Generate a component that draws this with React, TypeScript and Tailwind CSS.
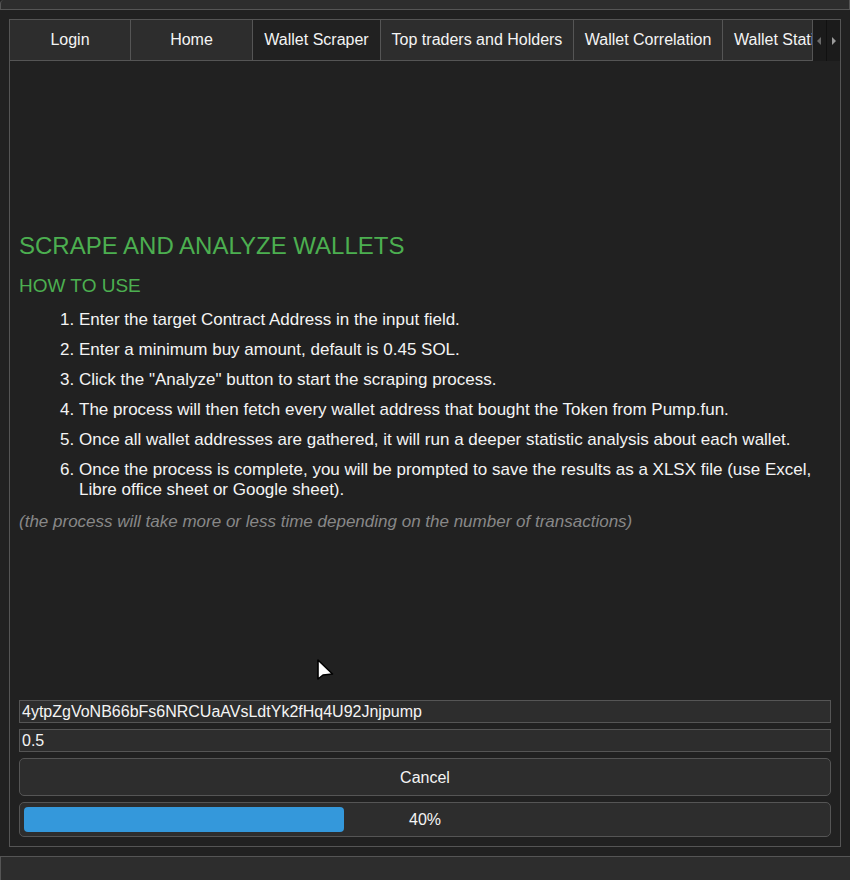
import React from "react";

const tabs = [
  { label: "Login", w: "w-[121px]" },
  { label: "Home", w: "w-[122px]" },
  { label: "Wallet Scraper", w: "w-[128px]", active: true },
  { label: "Top traders and Holders", w: "w-[193px]" },
  { label: "Wallet Correlation", w: "w-[149px]" },
  { label: "Wallet Statistics", w: "w-[90px]" },
];

const steps = [
  "Enter the target Contract Address in the input field.",
  "Enter a minimum buy amount, default is 0.45 SOL.",
  'Click the "Analyze" button to start the scraping process.',
  "The process will then fetch every wallet address that bought the Token from Pump.fun.",
  "Once all wallet addresses are gathered, it will run a deeper statistic analysis about each wallet.",
  "Once the process is complete, you will be prompted to save the results as a XLSX file (use Excel, Libre office sheet or Google sheet).",
];

const App = () => {
  const progress = 40;

  return (
    <div className="relative w-[850px] h-[880px] bg-[#212121] text-[#f4f4f4] font-['Liberation_Sans',Arial,sans-serif] flex flex-col overflow-hidden">
      {/* top strip */}
      <div className="h-[10px] bg-[#2d2d2d] border-l border-r border-b border-[#555] rounded-tl-sm"></div>

      {/* notebook */}
      <div className="mx-[9px] mt-[9px] h-[828px] border border-[#555] flex flex-col">
        <div className="flex h-[41px] border-b border-[#555]">
          {tabs.map((t) => (
            <div
              key={t.label}
              className={`${t.w} shrink-0 border-r border-[#555] flex items-center overflow-hidden whitespace-nowrap text-[16px] ${
                t.active ? "bg-[#212121]" : "bg-[#2d2d2d]"
              } ${t.label === "Wallet Statistics" ? "justify-start pl-[11px]" : "justify-center"}`}
            >
              {t.label}
            </div>
          ))}
          <div className="w-[14px] bg-[#1b1b1b] border-r border-[#111] flex items-center justify-center -mb-px">
            <svg width="5" height="8" viewBox="0 0 5 8">
              <path d="M4 0 L0 4 L4 8 Z" fill="#6a6a6a" />
            </svg>
          </div>
          <div className="w-[14px] bg-[#1b1b1b] flex items-center justify-center -mb-px">
            <svg width="5" height="8" viewBox="0 0 5 8">
              <path d="M1 0 L5 4 L1 8 Z" fill="#9a9a9a" />
            </svg>
          </div>
        </div>

        <div className="flex-1 flex flex-col px-[9px] pb-[9px]">
          <div className="flex-1 flex flex-col justify-center pt-[2px]">
            <h1 className="text-[24px] leading-[28px] text-[#4caf50]">SCRAPE AND ANALYZE WALLETS</h1>
            <h2 className="text-[19px] leading-[22px] text-[#4caf50] mt-[15px]">HOW TO USE</h2>
            <ol className="list-decimal pl-[60px] mt-[13px] text-[17px] leading-[20px] flex flex-col gap-[10px]">
              {steps.map((s) => (
                <li key={s}>{s}</li>
              ))}
            </ol>
            <p className="italic text-[#888] text-[17px] leading-[20px] mt-[12px]">
              (the process will take more or less time depending on the number of transactions)
            </p>
          </div>

          <div className="flex flex-col gap-[6px]">
            <div className="h-[23px] bg-[#2d2d2d] border border-[#555] px-[2px] flex items-center text-[16px]">
              4ytpZgVoNB66bFs6NRCUaAVsLdtYk2fHq4U92Jnjpump
            </div>
            <div className="h-[23px] bg-[#2d2d2d] border border-[#555] px-[2px] flex items-center text-[16px]">0.5</div>
            <div className="h-[38px] bg-[#2d2d2d] border border-[#555] rounded-[5px] flex items-center justify-center pt-[2px] text-[16px]">
              Cancel
            </div>
            <div className="relative h-[35px] bg-[#2d2d2d] border border-[#555] rounded-[5px] pl-[4px] pr-[6px] py-[4px]">
              <div className="h-full bg-[#3498db] rounded-[4px]" style={{ width: `${progress}%` }}></div>
              <div className="absolute inset-0 flex items-center justify-center text-[16px]">{progress}%</div>
            </div>
          </div>
        </div>
      </div>

      {/* bottom strip */}
      <div className="mt-[9px] flex-1 bg-[#2d2d2d] border-t border-l border-[#555]"></div>

      {/* mouse pointer */}
      <svg className="absolute left-[316px] top-[658px]" width="19" height="24" viewBox="0 0 19 24">
        <path d="M2 2 L2 21 L7 17 L16.5 16 Z" fill="#fff" stroke="#000" strokeWidth="1.6" strokeLinejoin="round" />
      </svg>
    </div>
  );
};

export default App;
